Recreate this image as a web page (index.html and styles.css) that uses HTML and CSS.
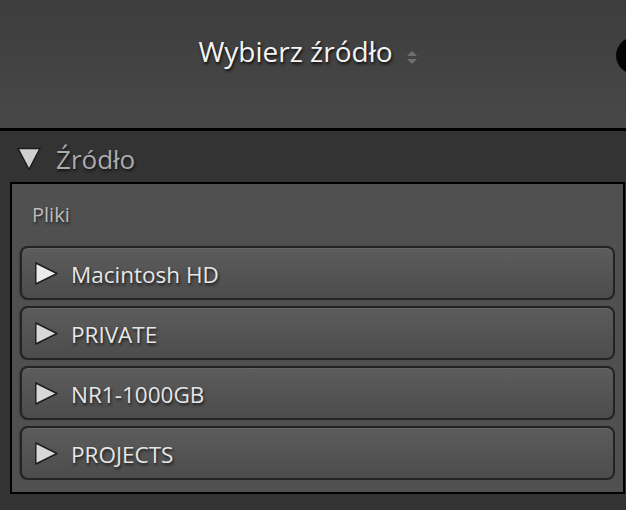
FILE: index.html
```html
<!DOCTYPE html>
<html lang="pl">
<head>
<meta charset="utf-8">
<title>Wybierz źródło</title>
<link rel="stylesheet" href="styles.css">
</head>
<body>
<div class="app">
  <header class="topbar">
    <div class="picker">
      <span class="picker-title">Wybierz źródło</span>
      <svg class="updown" width="12" height="15" viewBox="0 0 12 15"><path d="M6 1 L11 6 L1 6 Z" fill="#6f6f6f"/><path d="M1 9 L11 9 L6 14 Z" fill="#6f6f6f"/></svg>
    </div>
    <div class="orb"></div>
  </header>
  <section class="source">
    <div class="source-head">
      <svg class="tri-down" width="24" height="25" viewBox="0 0 24 25"><path d="M1 2.5 L23 2.5 L12 23.5 Z" fill="#cfcfcf" stroke="#1c1c1c" stroke-width="1.6" stroke-linejoin="round"/></svg>
      <span class="source-title">Źródło</span>
    </div>
    <div class="panel">
      <div class="panel-label">Pliki</div>
      <div class="rows">
        <div class="row"><svg class="tri-right" width="23" height="23" viewBox="0 0 23 23"><path d="M0.8 1 L22 11.5 L0.8 22 Z" fill="#ececec" stroke="#1c1c1c" stroke-width="1.4" stroke-linejoin="round"/></svg><span class="row-label">Macintosh HD</span></div>
        <div class="row"><svg class="tri-right" width="23" height="23" viewBox="0 0 23 23"><path d="M0.8 1 L22 11.5 L0.8 22 Z" fill="#d8d8d8" stroke="#1c1c1c" stroke-width="1.4" stroke-linejoin="round"/></svg><span class="row-label">PRIVATE</span></div>
        <div class="row"><svg class="tri-right" width="23" height="23" viewBox="0 0 23 23"><path d="M0.8 1 L22 11.5 L0.8 22 Z" fill="#d8d8d8" stroke="#1c1c1c" stroke-width="1.4" stroke-linejoin="round"/></svg><span class="row-label">NR1-1000GB</span></div>
        <div class="row"><svg class="tri-right" width="23" height="23" viewBox="0 0 23 23"><path d="M0.8 1 L22 11.5 L0.8 22 Z" fill="#d8d8d8" stroke="#1c1c1c" stroke-width="1.4" stroke-linejoin="round"/></svg><span class="row-label">PROJECTS</span></div>
      </div>
    </div>
  </section>
</div>
</body>
</html>
```
FILE: styles.css
```css
html, body {
  margin: 0;
  padding: 0;
  background: #333333;
  font-family: "Open Sans", "Liberation Sans", sans-serif;
}
.app {
  width: 626px;
  height: 510px;
  overflow: hidden;
  background: #333333;
}
.topbar {
  position: relative;
  height: 128px;
  border-bottom: 3px solid #000;
  background: linear-gradient(#3d3d3d, #484848);
  display: flex;
  justify-content: center;
  align-items: flex-start;
  overflow: hidden;
}
.picker {
  display: flex;
  align-items: center;
  gap: 13px;
  padding-top: 32px;
  margin-left: -10px;
}
.picker-title {
  font-size: 28px;
  line-height: 38px;
  color: #f4f4f4;
  text-shadow: 1px 2px 3px rgba(0,0,0,0.85);
}
.updown {
  margin-top: 12px;
}
.orb {
  position: absolute;
  left: 616px;
  top: 37px;
  width: 37px;
  height: 37px;
  border-radius: 50%;
  background: #050505;
}
.source-head {
  height: 51px;
  display: flex;
  align-items: center;
  padding-left: 17px;
  gap: 15px;
}
.tri-down {
  margin-top: 3px;
}
.source-title {
  font-size: 26px;
  line-height: 34px;
  color: #ababab;
  margin-top: 4px;
  text-shadow: 1px 2px 3px rgba(0,0,0,0.7);
}
.panel {
  margin-left: 10px;
  margin-right: 1px;
  border: 2px solid #000;
  background: #505050;
  padding: 0 8px 12px 8px;
}
.panel-label {
  height: 62px;
  box-sizing: border-box;
  padding-top: 17px;
  padding-left: 12px;
  font-size: 20px;
  line-height: 27px;
  color: #bcbcbc;
  text-shadow: 1px 2px 3px rgba(0,0,0,0.6);
}
.rows {
  display: flex;
  flex-direction: column;
  gap: 6px;
}
.row {
  height: 54px;
  box-sizing: border-box;
  border: 2px solid #232323;
  border-radius: 8px;
  background: linear-gradient(#5c5c5c, #4c4c4c);
  box-shadow: inset 0 1px 0 rgba(255,255,255,0.08), -1px 0 1px rgba(0,0,0,0.25);
  display: flex;
  align-items: center;
  padding-left: 13px;
  gap: 13px;
}
.row-label {
  font-size: 22.5px;
  line-height: 30px;
  color: #e6e6e6;
  margin-top: 4px;
  text-shadow: 1px 2px 3px rgba(0,0,0,0.7);
}
```
